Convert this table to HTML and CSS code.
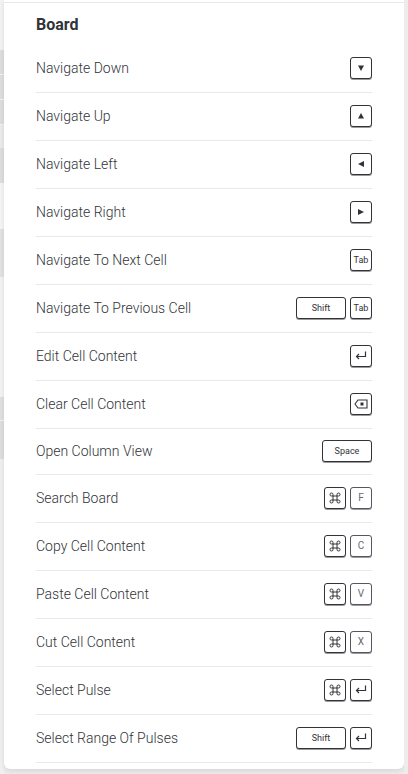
FILE: index.html
```html
<!DOCTYPE html>
<html>
<head>
<meta charset="utf-8">
<link rel="stylesheet" href="styles.css">
</head>
<body>
<div class="page">
  <div class="strip strip-left">
    <div class="blk b1"></div><div class="blk b2"></div><div class="blk b2"></div><div class="blk b2"></div><div class="blk b3"></div><div class="blk b4"></div><div class="blk b5"></div><div class="blk b6"></div><div class="blk b7"></div><div class="blk b8"></div><div class="blk b9"></div><div class="blk b10"></div>
  </div>
  <div class="card">
    <div class="topline"></div>
    <div class="heading">Board</div>
    <div class="rows">
      <div class="row"><span class="label">Navigate Down</span><span class="keys"><span class="key sq"><svg width="6" height="6" viewBox="0 0 6 6"><polygon points="0,0.5 6,0.5 3,6" fill="#323338"/></svg></span></span></div>
      <div class="row"><span class="label">Navigate Up</span><span class="keys"><span class="key sq"><svg width="6" height="6" viewBox="0 0 6 6"><polygon points="0,5.5 6,5.5 3,0" fill="#323338"/></svg></span></span></div>
      <div class="row"><span class="label">Navigate Left</span><span class="keys"><span class="key sq"><svg width="6" height="6" viewBox="0 0 6 6"><polygon points="6,0 6,6 0,3" fill="#323338"/></svg></span></span></div>
      <div class="row"><span class="label">Navigate Right</span><span class="keys"><span class="key sq"><svg width="6" height="6" viewBox="0 0 6 6"><polygon points="0,0 0,6 6,3" fill="#323338"/></svg></span></span></div>
      <div class="row"><span class="label">Navigate To Next Cell</span><span class="keys"><span class="key sq txt">Tab</span></span></div>
      <div class="row"><span class="label">Navigate To Previous Cell</span><span class="keys"><span class="key wide txt">Shift</span><span class="key sq txt">Tab</span></span></div>
      <div class="row"><span class="label">Edit Cell Content</span><span class="keys"><span class="key sq"><svg width="12" height="9" viewBox="0 0 12 9"><path d="M10.5 0.5 V5.5 H1.5" fill="none" stroke="#323338" stroke-width="1.2"/><path d="M4 3 L1.5 5.5 L4 8" fill="none" stroke="#323338" stroke-width="1.2"/></svg></span></span></div>
      <div class="row"><span class="label">Clear Cell Content</span><span class="keys"><span class="key sq"><svg width="14" height="10" viewBox="0 0 14 10"><path d="M4 1 H13 V9 H4 L1 5 Z" fill="none" stroke="#323338" stroke-width="1.1"/><rect x="6.5" y="3.5" width="3" height="3" fill="#323338"/></svg></span></span></div>
      <div class="row short"><span class="label">Open Column View</span><span class="keys"><span class="key wide txt">Space</span></span></div>
      <div class="row"><span class="label">Search Board</span><span class="keys"><span class="key sq cmd"><svg width="12" height="12" viewBox="0 0 12 12"><path d="M4 4 V2.5 A1.5 1.5 0 1 0 2.5 4 H9.5 A1.5 1.5 0 1 0 8 2.5 V9.5 A1.5 1.5 0 1 0 9.5 8 H2.5 A1.5 1.5 0 1 0 4 9.5 Z" fill="none" stroke="#323338" stroke-width="1"/></svg></span><span class="key sq letter">F</span></span></div>
      <div class="row"><span class="label">Copy Cell Content</span><span class="keys"><span class="key sq cmd"><svg width="12" height="12" viewBox="0 0 12 12"><path d="M4 4 V2.5 A1.5 1.5 0 1 0 2.5 4 H9.5 A1.5 1.5 0 1 0 8 2.5 V9.5 A1.5 1.5 0 1 0 9.5 8 H2.5 A1.5 1.5 0 1 0 4 9.5 Z" fill="none" stroke="#323338" stroke-width="1"/></svg></span><span class="key sq letter">C</span></span></div>
      <div class="row"><span class="label">Paste Cell Content</span><span class="keys"><span class="key sq cmd"><svg width="12" height="12" viewBox="0 0 12 12"><path d="M4 4 V2.5 A1.5 1.5 0 1 0 2.5 4 H9.5 A1.5 1.5 0 1 0 8 2.5 V9.5 A1.5 1.5 0 1 0 9.5 8 H2.5 A1.5 1.5 0 1 0 4 9.5 Z" fill="none" stroke="#323338" stroke-width="1"/></svg></span><span class="key sq letter">V</span></span></div>
      <div class="row"><span class="label">Cut Cell Content</span><span class="keys"><span class="key sq cmd"><svg width="12" height="12" viewBox="0 0 12 12"><path d="M4 4 V2.5 A1.5 1.5 0 1 0 2.5 4 H9.5 A1.5 1.5 0 1 0 8 2.5 V9.5 A1.5 1.5 0 1 0 9.5 8 H2.5 A1.5 1.5 0 1 0 4 9.5 Z" fill="none" stroke="#323338" stroke-width="1"/></svg></span><span class="key sq letter">X</span></span></div>
      <div class="row"><span class="label">Select Pulse</span><span class="keys"><span class="key sq cmd"><svg width="12" height="12" viewBox="0 0 12 12"><path d="M4 4 V2.5 A1.5 1.5 0 1 0 2.5 4 H9.5 A1.5 1.5 0 1 0 8 2.5 V9.5 A1.5 1.5 0 1 0 9.5 8 H2.5 A1.5 1.5 0 1 0 4 9.5 Z" fill="none" stroke="#323338" stroke-width="1"/></svg></span><span class="key sq"><svg width="12" height="9" viewBox="0 0 12 9"><path d="M10.5 0.5 V5.5 H1.5" fill="none" stroke="#323338" stroke-width="1.2"/><path d="M4 3 L1.5 5.5 L4 8" fill="none" stroke="#323338" stroke-width="1.2"/></svg></span></span></div>
      <div class="row"><span class="label">Select Range Of Pulses</span><span class="keys"><span class="key wide txt">Shift</span><span class="key sq"><svg width="12" height="9" viewBox="0 0 12 9"><path d="M10.5 0.5 V5.5 H1.5" fill="none" stroke="#323338" stroke-width="1.2"/><path d="M4 3 L1.5 5.5 L4 8" fill="none" stroke="#323338" stroke-width="1.2"/></svg></span></span></div>
    </div>
  </div>
  <div class="strip strip-right"></div>
</div>
</body>
</html>
```

FILE: styles.css
```css
html, body {
  margin: 0;
  padding: 0;
}
body {
  background: #ededed;
  font-family: Roboto, "Liberation Sans", sans-serif;
  width: 408px;
  height: 774px;
  overflow: hidden;
}
.page {
  display: flex;
  align-items: flex-start;
  height: 774px;
}
.strip {
  width: 4px;
  flex: none;
  align-self: stretch;
}
.strip-left {
  background: #f1f1f1;
  display: flex;
  flex-direction: column;
}
.blk { flex: none; }
.b1 { height: 50px; background: #f3f3f3; }
.b2 { height: 24px; background: #dedede; border-bottom: 1px solid #f3f3f3; }
.b3 { height: 23px; background: #ebebeb; }
.b4 { height: 35px; background: #dedede; }
.b5 { height: 46px; background: #f5f5f5; }
.b6 { height: 48px; background: #e2e2e2; }
.b7 { height: 120px; background: #f3f3f3; }
.b8 { height: 23px; background: #e0e0e0; border-bottom: 1px solid #f3f3f3; }
.b9 { height: 38px; background: #dedede; }
.b10 { flex: 1; background: #f0f0f0; }
.strip-right {
  background: #ececec;
}
.card {
  width: 400px;
  flex: none;
  background: #fff;
  border-radius: 0 0 6px 6px;
  box-shadow: 0 2px 5px rgba(0,0,0,0.10);
  padding: 2px 32px 6px;
  box-sizing: border-box;
}
.topline {
  height: 1px;
  background: #e8e8e8;
  margin: 0 -32px 0 -32px;
}
.heading {
  height: 42px;
  display: flex;
  align-items: center;
  font-size: 16px;
  font-weight: 700;
  color: #323338;
}
.rows {
  display: flex;
  flex-direction: column;
}
.row {
  height: 45px;
  padding-bottom: 2px;
  display: flex;
  align-items: center;
  justify-content: space-between;
  border-bottom: 1px solid #e6e9ef;
}
.row.short {
  height: 43px;
}
.label {
  font-size: 14px;
  color: #323338;
  font-weight: 300;
}
.keys {
  display: flex;
  gap: 4px;
}
.key {
  height: 22px;
  box-sizing: border-box;
  border: 1px solid #323338;
  border-radius: 3px;
  box-shadow: 0 1px 0 #9a9a9a;
  display: flex;
  align-items: center;
  justify-content: center;
  background: #fff;
  color: #323338;
}
.key.sq { width: 22px; }
.key.wide { width: 50px; }
.key.txt {
  font-size: 9px;
}
.key.letter {
  font-size: 10px;
  color: #676879;
  border-color: #55565f;
}
```
